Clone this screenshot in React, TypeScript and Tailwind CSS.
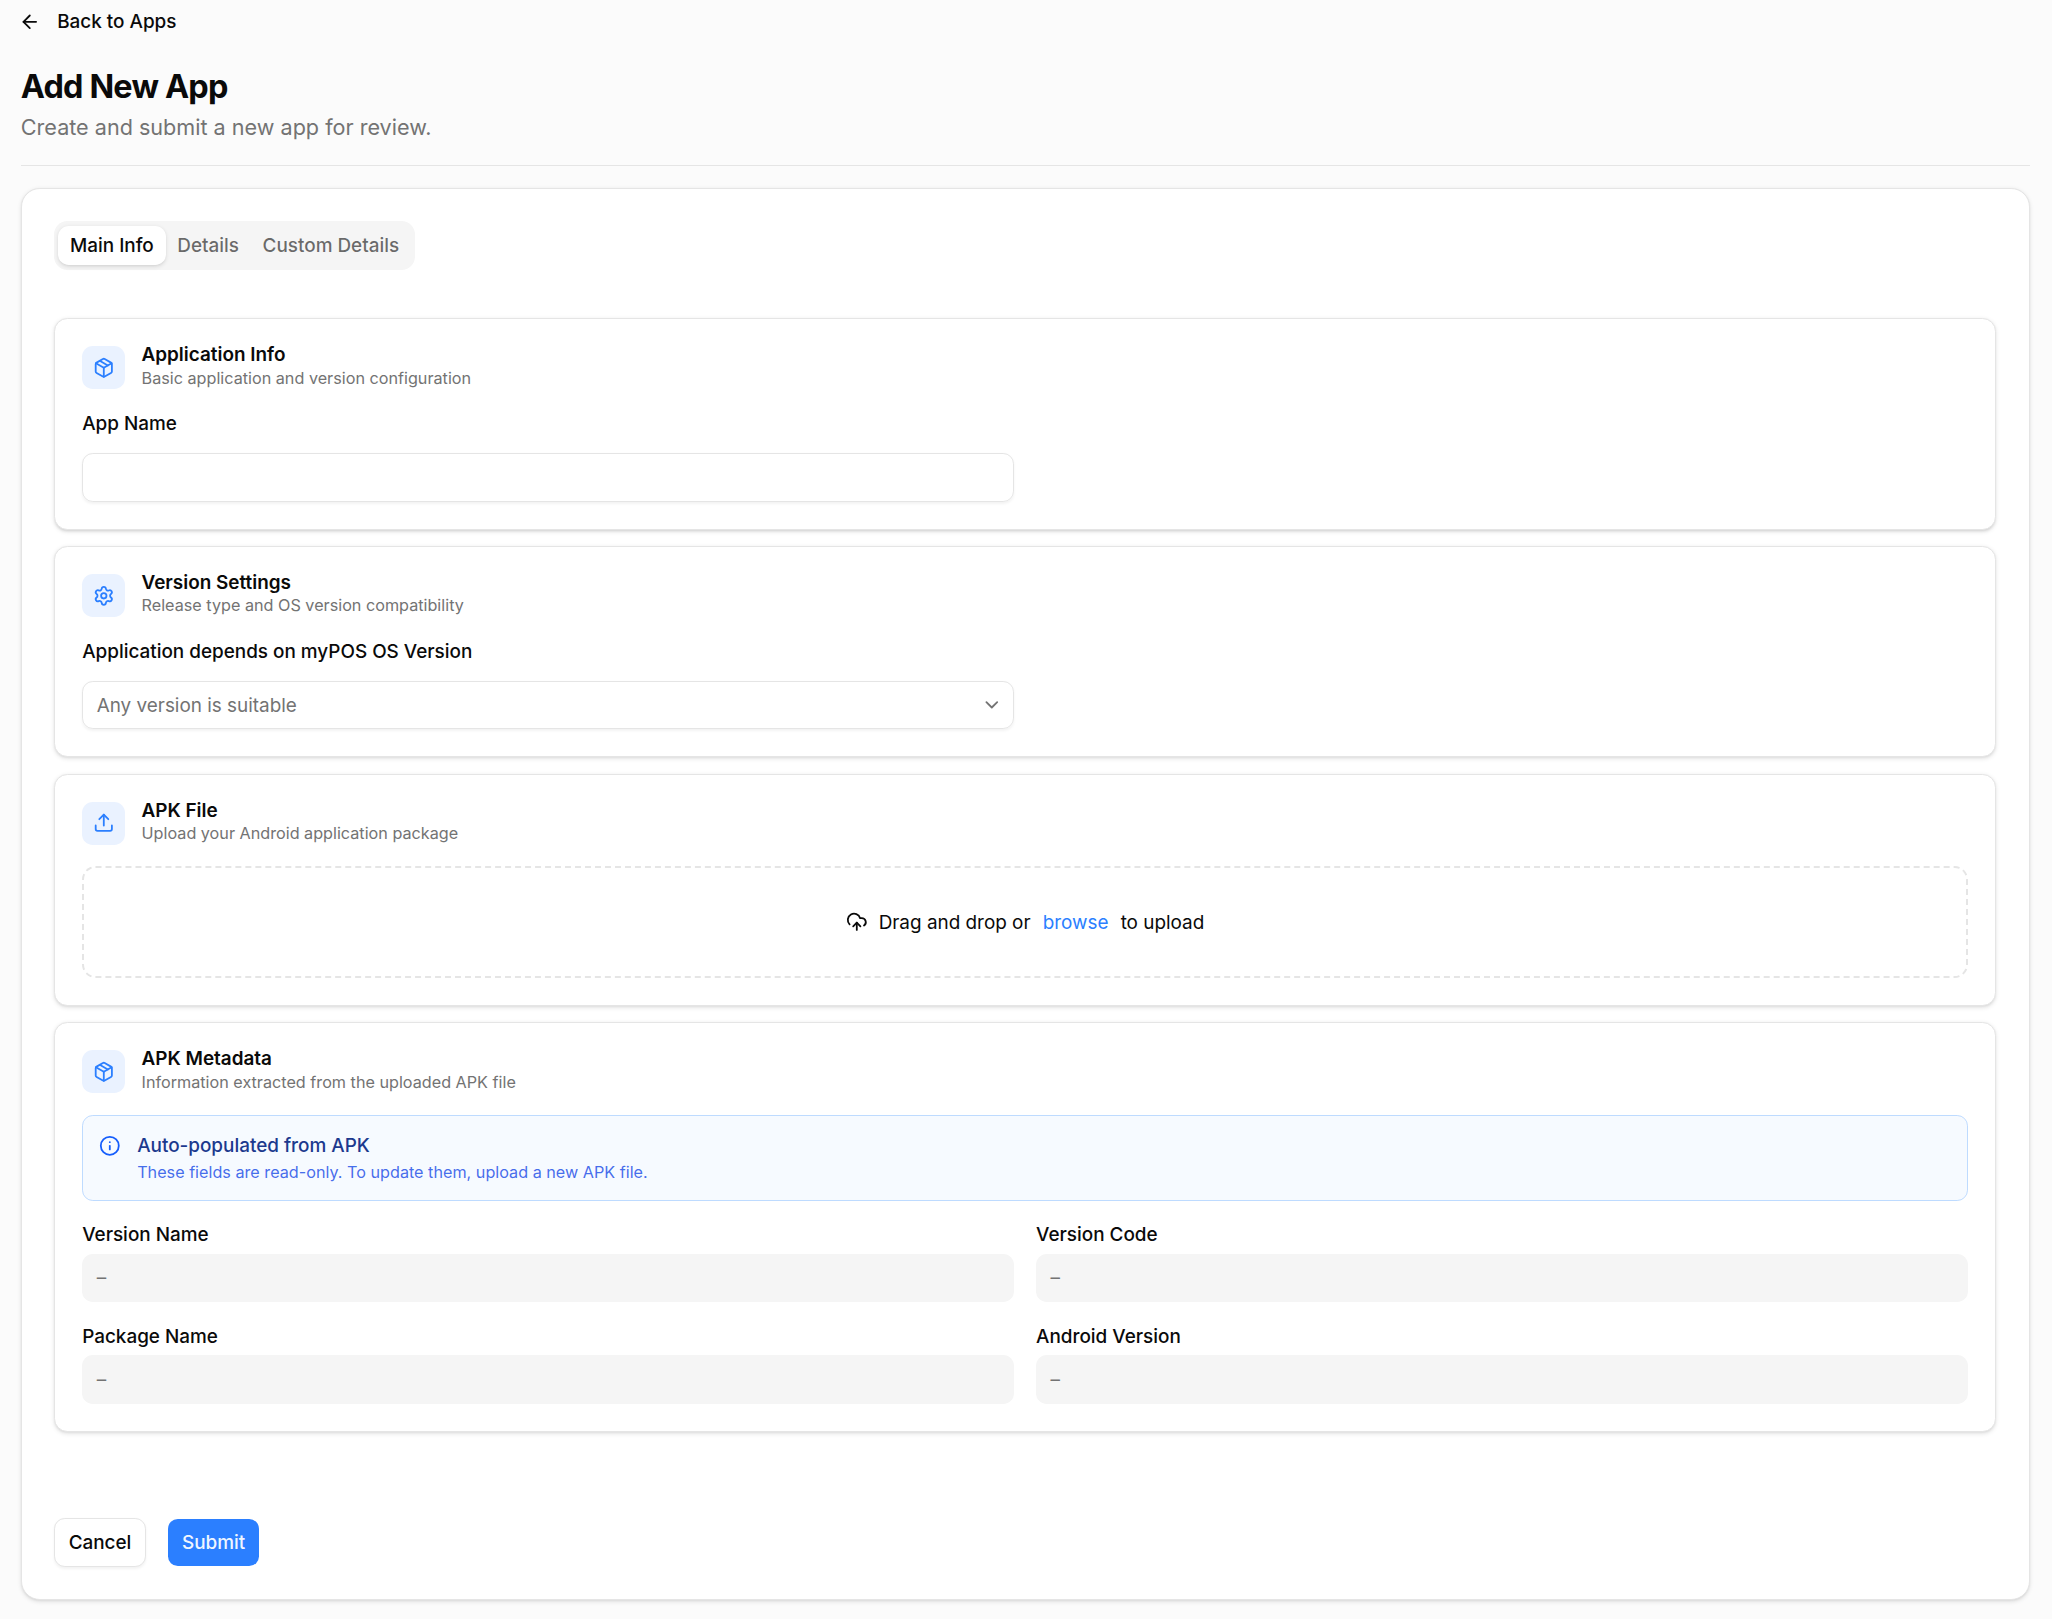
import type { ReactNode } from "react";
import {
  ArrowLeft,
  ChevronDown,
  CloudUpload,
  Info,
  Package,
  Settings,
  Upload,
  type LucideIcon,
} from "lucide-react";

const TABS = ["Main Info", "Details", "Custom Details"];

const METADATA_FIELDS = ["Version Name", "Version Code", "Package Name", "Android Version"];

interface SectionCardProps {
  icon: LucideIcon;
  title: string;
  description: string;
  children: ReactNode;
}

function SectionCard({ icon: Icon, title, description, children }: SectionCardProps) {
  return (
    <section className="rounded-[10px] border border-neutral-200 bg-white p-5 shadow-sm">
      <div className="mb-4 flex h-8 items-start gap-3">
        <div className="flex size-8 shrink-0 items-center justify-center rounded-lg bg-[#eaf2ff]">
          <Icon className="size-4 text-[#2b7fff]" />
        </div>
        <div>
          <h3 className="text-sm leading-none font-semibold">{title}</h3>
          <p className="mt-0.5 text-xs text-neutral-500">{description}</p>
        </div>
      </div>
      {children}
    </section>
  );
}

function TabsList() {
  return (
    <div className="flex h-9 w-fit items-center rounded-[10px] bg-neutral-100 p-[3px]">
      {TABS.map((tab, i) => (
        <button
          key={tab}
          className={
            i === 0
              ? "h-[29px] rounded-lg border border-transparent bg-white px-2 text-sm font-medium shadow-sm"
              : "h-[29px] rounded-lg border border-transparent px-2 text-sm font-medium text-neutral-950/60"
          }
        >
          {tab}
        </button>
      ))}
    </div>
  );
}

function ReadOnlyField({ label }: { label: string }) {
  return (
    <div className="flex flex-col gap-1">
      <span className="text-sm leading-snug font-medium">{label}</span>
      <div className="flex h-9 items-center rounded-lg border border-transparent bg-neutral-100 px-2.5 text-sm text-neutral-500">
        –
      </div>
    </div>
  );
}

export default function App() {
  return (
    <div className="min-h-[1200px] bg-[#fbfbfb] pr-[16.5px] pl-[15.4px] font-['Inter',sans-serif] text-neutral-950 [zoom:1.35]">
      <header className="border-b border-neutral-200 pb-4">
        <button className="-ml-px flex h-8 items-center gap-3 text-sm font-medium">
          <ArrowLeft className="size-4" />
          Back to Apps
        </button>
        <h1 className="mt-[15px] text-2xl leading-[35.15px] font-bold tracking-tight">Add New App</h1>
        <p className="text-base text-neutral-500">Create and submit a new app for review.</p>
      </header>

      <main className="mt-[16.15px] rounded-[14px] border border-neutral-200 bg-white p-6 shadow-sm">
        <TabsList />

        <div className="mt-[35.85px] flex flex-col gap-3">
          <SectionCard
            icon={Package}
            title="Application Info"
            description="Basic application and version configuration"
          >
            <div className="grid grid-cols-2 gap-4">
              <div className="flex flex-col gap-3">
                <label htmlFor="app-name" className="text-sm leading-snug font-medium">
                  App Name
                </label>
                <input
                  id="app-name"
                  className="h-9 w-full rounded-lg border border-neutral-200 px-2.5 text-sm shadow-xs outline-none"
                />
              </div>
            </div>
          </SectionCard>

          <SectionCard
            icon={Settings}
            title="Version Settings"
            description="Release type and OS version compatibility"
          >
            <div className="grid grid-cols-2 gap-4">
              <div className="flex flex-col gap-3">
                <span className="text-sm leading-snug font-medium">
                  Application depends on myPOS OS Version
                </span>
                <button className="flex h-9 w-full items-center justify-between rounded-lg border border-neutral-200 pr-2 pl-2.5 text-sm text-neutral-500 shadow-xs">
                  Any version is suitable
                  <ChevronDown className="size-4" />
                </button>
              </div>
            </div>
          </SectionCard>

          <SectionCard
            icon={Upload}
            title="APK File"
            description="Upload your Android application package"
          >
            <div className="flex h-[82.75px] items-center justify-center gap-2 rounded-[10px] border-2 border-dashed border-neutral-200 text-sm">
              <CloudUpload className="size-4" />
              <span>Drag and drop or</span>
              <span className="mx-px text-[#2b7fff]">browse</span>
              <span>to upload</span>
            </div>
          </SectionCard>

          <SectionCard
            icon={Package}
            title="APK Metadata"
            description="Information extracted from the uploaded APK file"
          >
            <div className="mb-4 flex gap-3 rounded-lg border border-blue-200 bg-[#f6faff] p-3">
              <Info className="mt-0.5 size-4 shrink-0 text-blue-600" />
              <div className="flex flex-col gap-0.5">
                <p className="text-sm font-medium text-blue-900">Auto-populated from APK</p>
                <p className="text-xs text-blue-700/80">
                  These fields are read-only. To update them, upload a new APK file.
                </p>
              </div>
            </div>
            <div className="grid grid-cols-2 gap-4">
              {METADATA_FIELDS.map((label) => (
                <ReadOnlyField key={label} label={label} />
              ))}
            </div>
          </SectionCard>
        </div>

        <div className="mt-[64.25px] flex gap-4">
          <button className="h-9 rounded-lg border border-neutral-200 bg-white px-2.5 text-sm font-medium shadow-xs">
            Cancel
          </button>
          <button className="h-9 rounded-lg border border-transparent bg-[#2b7fff] bg-clip-padding px-2.5 text-sm font-medium text-blue-50">
            Submit
          </button>
        </div>
      </main>
    </div>
  );
}
